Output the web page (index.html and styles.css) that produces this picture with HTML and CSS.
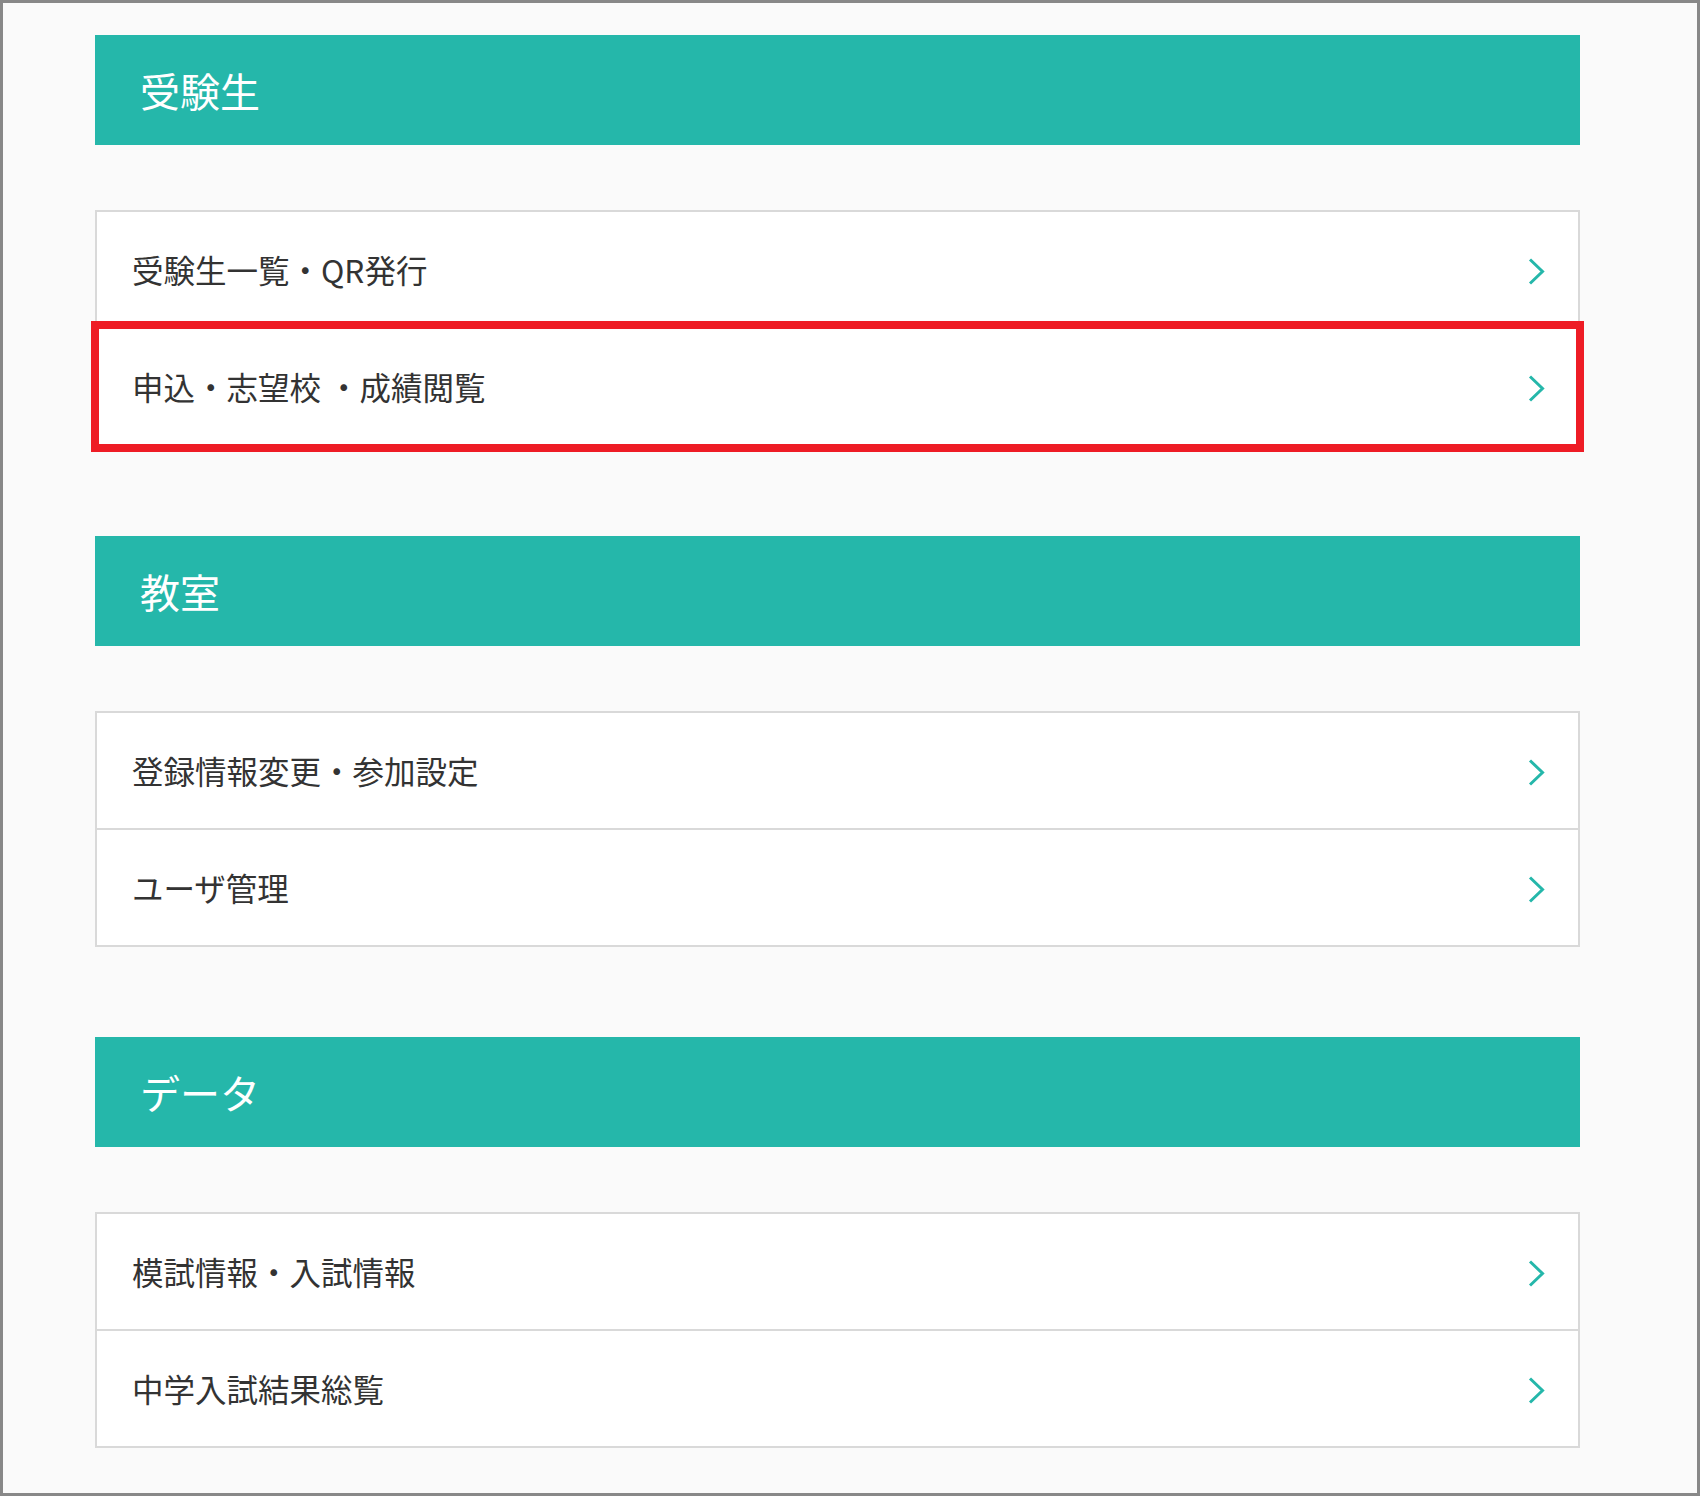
FILE: index.html
```html
<!DOCTYPE html>
<html lang="ja">
<head>
<meta charset="utf-8">
<title>メニュー</title>
<link rel="stylesheet" href="styles.css">
</head>
<body>
<div class="frame">
  <main class="menu">
    <section class="group">
      <h2 class="group-title">受験生</h2>
      <ul class="list">
        <li class="item"><span class="label">受験生一覧・QR発行</span><svg class="chev" viewBox="0 0 17 27" width="17" height="27"><polyline points="2,1.5 14.5,13.5 2,25.5"/></svg></li>
        <li class="item item-marked"><span class="label">申込・志望校 ・成績閲覧</span><svg class="chev" viewBox="0 0 17 27" width="17" height="27"><polyline points="2,1.5 14.5,13.5 2,25.5"/></svg></li>
      </ul>
    </section>
    <section class="group">
      <h2 class="group-title">教室</h2>
      <ul class="list">
        <li class="item"><span class="label">登録情報変更・参加設定</span><svg class="chev" viewBox="0 0 17 27" width="17" height="27"><polyline points="2,1.5 14.5,13.5 2,25.5"/></svg></li>
        <li class="item"><span class="label">ユーザ管理</span><svg class="chev" viewBox="0 0 17 27" width="17" height="27"><polyline points="2,1.5 14.5,13.5 2,25.5"/></svg></li>
      </ul>
    </section>
    <section class="group">
      <h2 class="group-title">データ</h2>
      <ul class="list">
        <li class="item"><span class="label">模試情報・入試情報</span><svg class="chev" viewBox="0 0 17 27" width="17" height="27"><polyline points="2,1.5 14.5,13.5 2,25.5"/></svg></li>
        <li class="item"><span class="label">中学入試結果総覧</span><svg class="chev" viewBox="0 0 17 27" width="17" height="27"><polyline points="2,1.5 14.5,13.5 2,25.5"/></svg></li>
      </ul>
    </section>
  </main>
</div>
</body>
</html>
```
FILE: styles.css
```css
html, body {
  margin: 0;
  padding: 0;
}
body {
  font-family: "Noto Sans CJK JP", "Noto Sans", sans-serif;
  background: #fafafa;
}
.frame {
  box-sizing: border-box;
  width: 1700px;
  height: 1496px;
  border: 3px solid #888888;
  background: #fafafa;
  padding: 32px 0 0 92px;
}
.menu {
  width: 1485px;
  display: flex;
  flex-direction: column;
  gap: 90px;
}
.group {
  display: flex;
  flex-direction: column;
  gap: 65px;
}
.group-title {
  margin: 0;
  height: 110px;
  box-sizing: border-box;
  display: flex;
  align-items: center;
  padding-left: 45px;
  background: #25b7aa;
  color: #ffffff;
  font-size: 40px;
  font-weight: 400;
  line-height: 1;
}
.list {
  list-style: none;
  margin: 0;
  padding: 0;
  background: #ffffff;
  border: 2px solid #d9d9d9;
}
.item {
  position: relative;
  height: 115px;
  display: flex;
  align-items: center;
  justify-content: space-between;
  padding: 0 33px 0 35px;
  color: #333333;
  font-size: 31.5px;
  line-height: 1;
}
.item + .item {
  border-top: 2px solid #d9d9d9;
}
.chev {
  display: block;
  margin-top: 4px;
  fill: none;
  stroke: #25b7aa;
  stroke-width: 3;
}
.item-marked::after {
  content: "";
  position: absolute;
  top: -8px;
  bottom: -8px;
  left: -6px;
  right: -6px;
  border: 8px solid #ee1c25;
  pointer-events: none;
}
```
